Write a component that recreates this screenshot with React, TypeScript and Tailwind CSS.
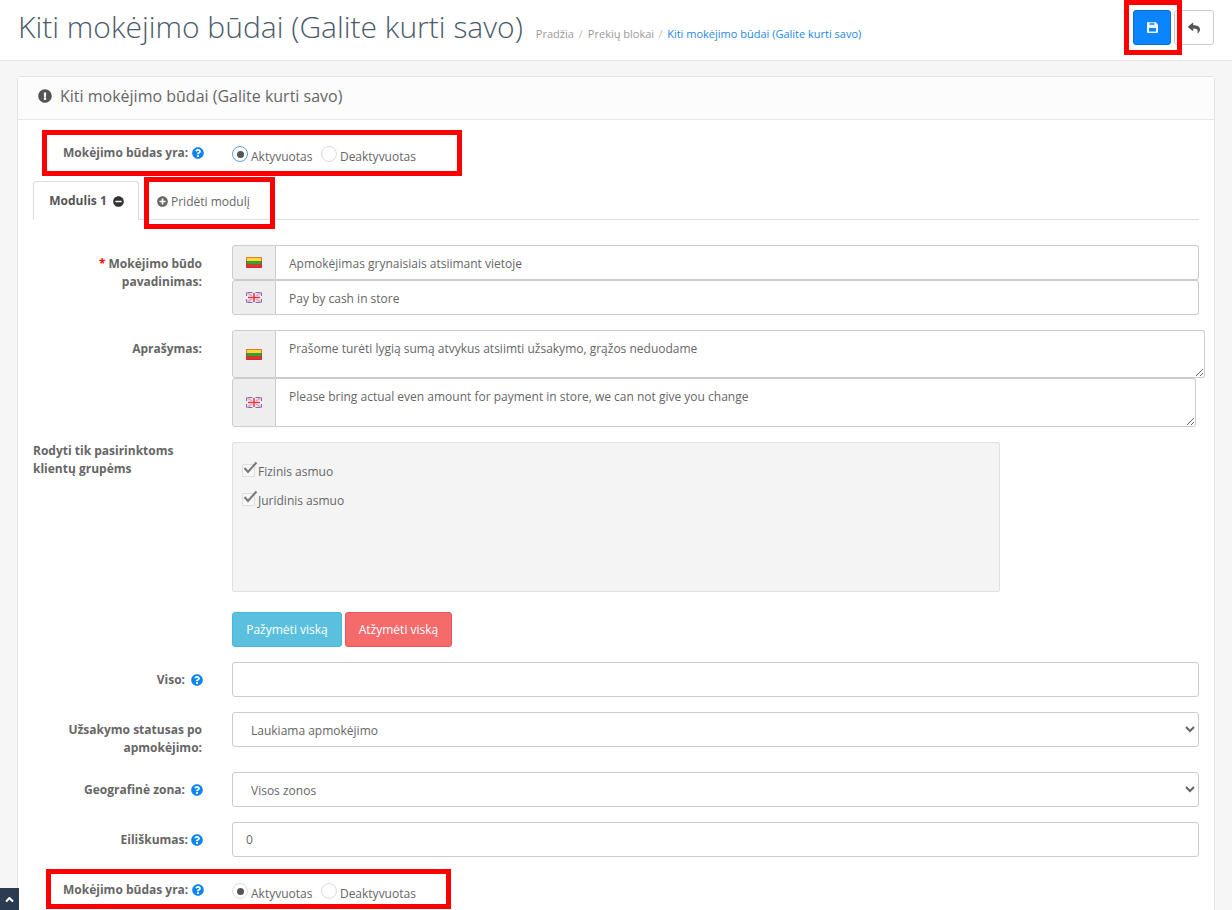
import { ReactNode } from "react";
import {
  FaAngleUp,
  FaExclamationCircle,
  FaMinusCircle,
  FaPlusCircle,
  FaQuestionCircle,
  FaReply,
} from "react-icons/fa";

const font = { fontFamily: '"Open Sans", sans-serif' };

function SaveIcon() {
  return (
    <svg width="11" height="11" viewBox="0 0 11 11">
      <path d="M0 1a1 1 0 0 1 1-1h7.5L11 2.5V10a1 1 0 0 1-1 1H1a1 1 0 0 1-1-1Z" fill="#eef5ff" />
      <rect x="2.5" y="0.5" width="5" height="2.5" fill="#5a9fee" />
      <rect x="2" y="6" width="7" height="3.5" fill="#0a84ff" />
    </svg>
  );
}

function LtFlag() {
  return (
    <svg width="16" height="11" viewBox="0 0 16 11">
      <rect width="16" height="11" rx="1" fill="#c1272d" />
      <rect x="0.5" y="0.5" width="15" height="3.5" fill="#fdd835" />
      <rect x="0.5" y="4" width="15" height="3.5" fill="#3f9c35" />
      <rect x="0.5" y="7.5" width="15" height="3" fill="#e0332f" />
    </svg>
  );
}

function GbFlag() {
  return (
    <svg width="16" height="11" viewBox="0 0 16 11">
      <rect width="16" height="11" fill="#6a70c4" />
      <rect x="1" y="1" width="14" height="9" fill="#e4e2f0" />
      <path d="M0 0L16 11M16 0L0 11" stroke="#eb9aa6" strokeWidth="1.4" />
      <path d="M8 0V11M0 5.5H16" stroke="#f6eef2" strokeWidth="3" />
      <path d="M8 1V10M2 5.5H14" stroke="#ea3340" strokeWidth="1.5" />
    </svg>
  );
}

function Help() {
  return <FaQuestionCircle className="inline-block text-[12px] text-[#0a84f0]" />;
}

function Radio({ label, checked, focused }: { label: string; checked?: boolean; focused?: boolean }) {
  return (
    <span className="flex items-start">
      <span
        className={`mt-[2px] flex h-[16px] w-[16px] items-center justify-center rounded-full border bg-white ${
          focused ? "border-[#5b9ddf]" : "border-[#dcdcdc]"
        }`}
      >
        {checked && <span className="h-[7px] w-[7px] rounded-full bg-[#555]" />}
      </span>
      <span className="ml-[3px] mt-[4px] text-[12px] leading-[18px] text-[#666]">{label}</span>
    </span>
  );
}

function StatusRow({ focused }: { focused?: boolean }) {
  return (
    <div className="flex items-start pl-[30px]">
      <div className="flex w-[169px] items-center gap-[4px] text-[12px] font-bold leading-[18px] text-[#666]">
        Mokėjimo būdas yra: <Help />
      </div>
      <div className="flex gap-[8.5px]">
        <Radio label="Aktyvuotas" checked focused={focused} />
        <Radio label="Deaktyvuotas" />
      </div>
    </div>
  );
}

function Row({
  label,
  children,
  className = "",
  labelTop = "pt-[9px]",
}: {
  label: ReactNode;
  children: ReactNode;
  className?: string;
  labelTop?: string;
}) {
  return (
    <div className={`flex ${className}`}>
      <div className={`w-[169px] shrink-0 text-right text-[12px] font-bold leading-[18px] text-[#666] ${labelTop}`}>
        {label}
      </div>
      <div className="ml-[30px] min-w-0 flex-1">{children}</div>
    </div>
  );
}

function Addon({ children }: { children: ReactNode }) {
  return (
    <span className="flex w-[44px] shrink-0 items-center justify-center rounded-l-[3px] border border-[#ccc] bg-[#eee]">
      {children}
    </span>
  );
}

function FlagInput({ flag, value }: { flag: ReactNode; value: string }) {
  return (
    <div className="flex h-[35px]">
      <Addon>{flag}</Addon>
      <input
        readOnly
        value={value}
        className="h-full min-w-0 flex-1 rounded-r-[3px] border border-l-0 border-[#ccc] bg-white px-[13px] pt-[1px] text-[12px] text-[#666] outline-none"
      />
    </div>
  );
}

function FlagArea({ flag, value, height, width }: { flag: ReactNode; value: string; height: string; width: string }) {
  return (
    <div className={`flex ${height}`}>
      <Addon>{flag}</Addon>
      <textarea
        readOnly
        value={value}
        className={`h-full shrink-0 ${width} rounded-r-[3px] border border-l-0 border-[#ccc] bg-white px-[13px] py-[9px] text-[12px] leading-[18px] text-[#666] outline-none`}
      />
    </div>
  );
}

function Check({ label }: { label: string }) {
  return (
    <div className="flex h-[29px] items-start">
      <span className="relative mt-[2px] h-[13px] w-[13px] rounded-[1px] border border-[#ddd] bg-[#f8f8f8]">
        <svg width="16" height="14" viewBox="0 0 16 14" className="absolute left-[0px] top-[-4px]">
          <path d="M1.5 7L5 11L13.5 1.5" fill="none" stroke="#777" strokeWidth="2" />
        </svg>
      </span>
      <span className="ml-[3px] mt-[1px] text-[12px] leading-[18px] text-[#666]">{label}</span>
    </div>
  );
}

function Choice({ value }: { value: string }) {
  return (
    <select
      defaultValue={value}
      className="h-[35px] w-full rounded-[3px] border border-[#ccc] bg-white pl-[14px] pt-[1px] text-[12px] text-[#666] outline-none"
    >
      <option>{value}</option>
    </select>
  );
}

const plainInput =
  "block h-[35px] w-full rounded-[3px] border border-[#ccc] bg-white px-[13px] text-[12px] text-[#666] outline-none";

export default function App() {
  return (
    <div style={font} className="relative h-[910px] overflow-hidden bg-[#f6f6f6]">
      {/* page header */}
      <header className="flex h-[61px] items-center border-b border-[#e4e4e4] bg-white pl-[18px] pr-[18px]">
        <h1 className="mb-[6px] text-[30px] font-light leading-[56px] text-[#4a5a6a]">
          Kiti mokėjimo būdai (Galite kurti savo)
        </h1>
        <nav className="ml-[13px] mt-[8px] flex text-[11px] text-[#999]">
          <span>Pradžia</span>
          <span className="mx-[5px] text-[#bbb]">/</span>
          <span>Prekių blokai</span>
          <span className="mx-[4.5px] text-[#bbb]">/</span>
          <span className="text-[#1e88e5]">Kiti mokėjimo būdai (Galite kurti savo)</span>
        </nav>
        <div className="mb-[5px] ml-auto flex gap-[3px]">
          <button className="flex h-[35px] w-[38px] items-center justify-center rounded-[3px] border border-[#0a6fd0] bg-[#0a84ff] text-[12px] text-white">
            <SaveIcon />
          </button>
          <button className="flex h-[35px] w-[40px] items-center justify-center rounded-[3px] border border-[#ccc] bg-white text-[12px] text-[#555]">
            <FaReply />
          </button>
        </div>
      </header>

      {/* panel */}
      <section className="ml-[17px] mr-[17px] mt-[15px] rounded-t-[3px] border border-[#e4e4e4] bg-white">
        <div className="flex h-[43px] items-center gap-[8px] border-b border-[#e8e8e8] bg-[#fcfcfc] pb-[4px] pl-[20px] text-[16px] text-[#666]">
          <FaExclamationCircle className="text-[14px] text-[#555]" />
          Kiti mokėjimo būdai (Galite kurti savo)
        </div>

        <div className="pl-[15px] pr-[15px]">
          <div className="h-[61px] pt-[24px]">
            <StatusRow focused />
          </div>

          <div className="flex h-[39px] border-b border-[#ddd]">
            <div className="flex h-[39px] w-[106px] items-center justify-center gap-[6px] rounded-t-[3px] border border-b-0 border-[#ddd] bg-white pl-[1px] text-[12px] font-bold text-[#555]">
              Modulis 1 <FaMinusCircle className="text-[11px] text-[#333]" />
            </div>
            <div className="ml-[18px] flex items-center gap-[3px] pt-[3px] text-[12px] text-[#666]">
              <FaPlusCircle className="text-[11px] text-[#666]" /> Pridėti modulį
            </div>
          </div>

          <Row
            className="mt-[25px]"
            labelTop="pt-[10px]"
            label={
              <>
                <span className="text-[#f00]">*</span> Mokėjimo būdo
                <br />
                pavadinimas:
              </>
            }
          >
            <FlagInput flag={<LtFlag />} value="Apmokėjimas grynaisiais atsiimant vietoje" />
            <FlagInput flag={<GbFlag />} value="Pay by cash in store" />
          </Row>

          <Row className="mt-[15px]" labelTop="pt-[10px]" label="Aprašymas:">
            <FlagArea
              flag={<LtFlag />}
              value="Prašome turėti lygią sumą atvykus atsiimti užsakymo, grąžos neduodame"
              height="h-[48px]"
              width="w-[929px]"
            />
            <FlagArea
              flag={<GbFlag />}
              value="Please bring actual even amount for payment in store, we can not give you change"
              height="h-[49px]"
              width="w-[920px]"
            />
          </Row>

          <div className="mt-[15px] flex">
            <div className="w-[169px] shrink-0 text-[12px] font-bold leading-[18px] text-[#666]">
              Rodyti tik pasirinktoms klientų grupėms
            </div>
            <div className="ml-[30px] h-[150px] w-[768px] rounded-[2px] border border-[#e0e0e0] bg-[#f4f4f4] pl-[9px] pt-[19px]">
              <Check label="Fizinis asmuo" />
              <Check label="Juridinis asmuo" />
            </div>
          </div>

          <div className="ml-[199px] mt-[20px] flex gap-[3px]">
            <button className="h-[35px] w-[110px] rounded-[3px] border border-[#46b8da] bg-[#5bc0de] text-[12px] text-white">
              Pažymėti viską
            </button>
            <button className="h-[35px] w-[107px] rounded-[3px] border border-[#e8555a] bg-[#f56b6b] text-[12px] text-white">
              Atžymėti viską
            </button>
          </div>

          <Row
            className="mt-[15px]"
            label={
              <span className="mr-[-1px] inline-flex items-center gap-[6px]">
                Viso: <Help />
              </span>
            }
          >
            <input readOnly className={plainInput} />
          </Row>

          <Row
            className="mt-[15px]"
            label={
              <>
                Užsakymo statusas po
                <br />
                apmokėjimo:
              </>
            }
          >
            <Choice value="Laukiama apmokėjimo" />
          </Row>

          <Row
            className="mt-[15px]"
            label={
              <span className="mr-[-1px] inline-flex items-center gap-[6px]">
                Geografinė zona: <Help />
              </span>
            }
          >
            <Choice value="Visos zonos" />
          </Row>

          <Row
            className="mt-[15px]"
            label={
              <span className="mr-[-1px] inline-flex items-center gap-[3px]">
                Eiliškumas: <Help />
              </span>
            }
          >
            <input readOnly value="0" className={plainInput} />
          </Row>

          <div className="mt-[24px] pb-[20px]">
            <StatusRow />
          </div>
        </div>
      </section>

      {/* scroll to top */}
      <button className="absolute bottom-0 left-0 flex h-[22px] w-[19px] items-center justify-center bg-[#2a3b52] text-[13px] text-white">
        <FaAngleUp />
      </button>

      {/* red annotation frames on the screenshot */}
      <div className="absolute left-[1124px] top-0 h-[55px] w-[58px] border-[5px] border-[#f00]" />
      <div className="absolute left-[42px] top-[130px] h-[46px] w-[420px] border-[5px] border-[#f00]" />
      <div className="absolute left-[144px] top-[177px] h-[52px] w-[131px] border-[5px] border-[#f00]" />
      <div className="absolute left-[46px] top-[869px] h-[40px] w-[405px] border-[5px] border-[#f00]" />
    </div>
  );
}
